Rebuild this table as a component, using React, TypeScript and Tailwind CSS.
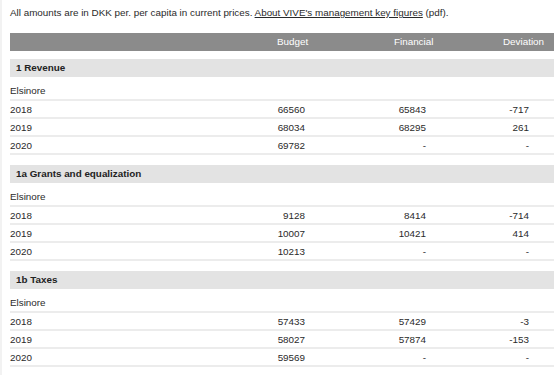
const sections = [
  {
    title: "1 Revenue",
    rows: [
      ["2018", "66560", "65843", "-717"],
      ["2019", "68034", "68295", "261"],
      ["2020", "69782", "-", "-"],
    ],
  },
  {
    title: "1a Grants and equalization",
    rows: [
      ["2018", "9128", "8414", "-714"],
      ["2019", "10007", "10421", "414"],
      ["2020", "10213", "-", "-"],
    ],
  },
  {
    title: "1b Taxes",
    rows: [
      ["2018", "57433", "57429", "-3"],
      ["2019", "58027", "57874", "-153"],
      ["2020", "59569", "-", "-"],
    ],
  },
]

function DataRow({ cells }: { cells: string[] }) {
  return (
    <div className="grid grid-cols-[230px_65px_121px_103px_1fr] h-[18px] leading-[17px] border-b-2 border-[#ececec]">
      <span>{cells[0]}</span>
      <span className="text-right">{cells[1]}</span>
      <span className="text-right">{cells[2]}</span>
      <span className="text-right">{cells[3]}</span>
      <span />
    </div>
  )
}

export default function App() {
  return (
    <div
      className="flex min-h-screen bg-white text-[9.85px] text-[#2a2a2a]"
      style={{ fontFamily: '"Liberation Sans", Arial, sans-serif' }}
    >
      <div className="w-[2px] shrink-0 bg-[#f2f2f2]" />
      <div className="flex-1 min-w-0 pl-[8px] pt-[6px] overflow-hidden">
        <p className="h-[14px] leading-[14px] whitespace-nowrap">
          All amounts are in DKK per. per capita in current prices.{" "}
          <a className="underline">About VIVE's management key figures</a> (pdf).
        </p>

        <div className="mt-[13px] mb-[8px] grid grid-cols-[267px_117px_109px_1fr] h-[18px] overflow-hidden bg-[#8b8b8b] text-white leading-[13px] pt-[2px]">
          <span />
          <span>Budget</span>
          <span className="w-[42px]">Financial accounts</span>
          <span>Deviation</span>
        </div>

        {sections.map((s) => (
          <div key={s.title} className="mb-[10px]">
            <div className="h-[18px] leading-[18px] bg-[#e3e3e3] pl-[6px] font-bold text-[#222]">
              {s.title}
            </div>
            <div className="h-[24px] pt-[7px] leading-[14px] border-b-2 border-[#ececec]">Elsinore</div>
            {s.rows.map((r) => (
              <DataRow key={r[0]} cells={r} />
            ))}
          </div>
        ))}
      </div>
    </div>
  )
}
